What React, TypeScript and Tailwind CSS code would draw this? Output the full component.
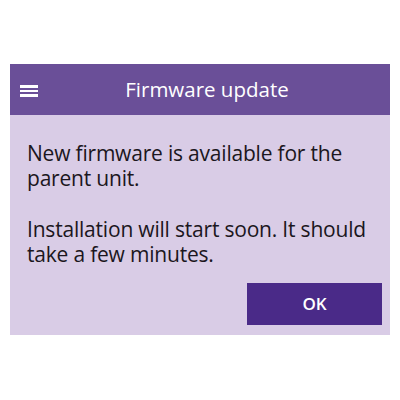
export default function App() {
  return (
    <div className="w-[400px] h-[400px] bg-white pt-[64px] px-[10px]" style={{ fontFamily: '"Open Sans", "Noto Sans", sans-serif' }}>
      <div className="w-[380px] h-[271px] bg-[#d9cce6] flex flex-col">
        {/* Header */}
        <div className="h-[51px] bg-[#6a4f98] flex items-center relative">
          <div className="absolute left-[10px] top-[21px] flex flex-col gap-[2px]">
            <div className="w-[18px] h-[2.5px] bg-white" />
            <div className="w-[18px] h-[2.5px] bg-white" />
            <div className="w-[18px] h-[2.5px] bg-white" />
          </div>
          <h1 className="w-full pl-[14px] text-center text-white text-[20.5px] font-medium">Firmware update</h1>
        </div>
        {/* Body */}
        <div className="flex-1 pl-[17px] pr-[8px] pt-[26px] text-[#1b1620] text-[21px] leading-[25px] font-medium tracking-[-0.2px]">
          <p>New firmware is available for the parent unit.</p>
          <p className="mt-[26px]">Installation will start soon. It should take a few minutes.</p>
        </div>
        <div className="flex justify-end pr-[8px] pb-[10px]">
          <button className="w-[135px] h-[42px] bg-[#4a2a88] text-white text-[17px] font-semibold">OK</button>
        </div>
      </div>
    </div>
  );
}
